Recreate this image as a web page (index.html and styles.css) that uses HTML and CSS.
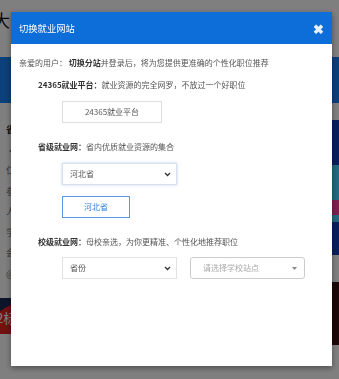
FILE: index.html
```html
<!DOCTYPE html>
<html lang="zh-CN">
<head>
    <meta charset="UTF-8">
    <meta name="viewport" content="width=device-width, initial-scale=1.0">
    <title>切换就业网站</title>
    <link rel="stylesheet" href="styles.css">
</head>
<body>
    <div class="site">
        <div class="site-header"><span class="site-logo">大</span></div>
        <div class="site-nav"></div>
        <div class="site-main">
            <div class="site-left">
                <p class="news-title">省</p>
                <p>·</p>
                <p>仁</p>
                <p>参</p>
                <p>人</p>
                <p>学</p>
                <p>会</p>
                <p>@</p>
                <div class="promo"><span>2标</span></div>
            </div>
            <div class="site-right">
                <div class="ad ad-blue"></div>
                <div class="ad ad-teal"><span class="ad-pink"></span></div>
                <div class="ad ad-navy"></div>
                <div class="ad ad-dark"></div>
            </div>
        </div>
    </div>

    <div class="mask"></div>

    <div class="modal">
        <div class="modal-head">
            <span class="modal-title">切换就业网站</span>
            <span class="modal-close">&#10006;</span>
        </div>
        <div class="modal-body">
            <p class="intro">亲爱的用户： <b>切换分站</b>并登录后，将为您提供更准确的个性化职位推荐</p>

            <p class="label"><b>24365就业平台：</b>就业资源的完全网罗，不放过一个好职位</p>
            <div class="row">
                <a class="btn">24365就业平台</a>
            </div>

            <p class="label label-gap"><b>省级就业网：</b>省内优质就业资源的集合</p>
            <div class="row">
                <div class="select select-focus">
                    <span>河北省</span>
                    <svg width="7" height="5" viewBox="0 0 7 5"><path d="M1 1l2.5 2.5L6 1" fill="none" stroke="#333" stroke-width="1.3"/></svg>
                </div>
            </div>
            <div class="row row-btn">
                <a class="btn btn-blue">河北省</a>
            </div>

            <p class="label label-gap"><b>校级就业网：</b>母校亲选，为你更精准、个性化地推荐职位</p>
            <div class="row row-selects">
                <div class="select">
                    <span>省份</span>
                    <svg width="7" height="5" viewBox="0 0 7 5"><path d="M1 1l2.5 2.5L6 1" fill="none" stroke="#333" stroke-width="1.3"/></svg>
                </div>
                <div class="select select-school">
                    <span>请选择学校站点</span>
                    <svg width="5" height="3" viewBox="0 0 5 3"><path d="M0 0h5L2.5 3z" fill="#888"/></svg>
                </div>
            </div>
        </div>
    </div>
</body>
</html>
```

FILE: styles.css
```css
body {
    margin: 0;
    padding: 0;
    font-family: "Noto Sans CJK SC", "Liberation Sans", sans-serif;
    background: #ffffff;
    overflow: hidden;
}

p {
    margin: 0;
}

/* page behind the dialog */
.site {
    width: 339px;
    height: 379px;
}

.site-header {
    height: 57px;
    padding-top: 9px;
    box-sizing: border-box;
}

.site-logo {
    display: block;
    margin-left: -7px;
    font-size: 17px;
    line-height: 22px;
    color: #111;
}

.site-nav {
    height: 46px;
    background: #1680f5;
}

.site-main {
    display: flex;
    justify-content: space-between;
}

.site-left {
    width: 60px;
    padding-top: 17px;
    padding-left: 6px;
    font-size: 9px;
    line-height: 20.5px;
    color: #707070;
}

.site-left .news-title {
    font-weight: bold;
    color: #222;
}

.promo {
    margin-left: -6px;
    margin-top: 14px;
    height: 36px;
    width: 40px;
    background: linear-gradient(150deg, #1c2a55 0 22%, #e02424 22%);
    color: #fff;
    font-size: 13px;
    line-height: 40px;
    overflow: hidden;
    white-space: nowrap;
}

.promo span {
    margin-left: -4px;
}

.site-right {
    width: 40px;
    padding-top: 17px;
}

.ad {
    height: 45px;
}

.ad-blue {
    background: #163cbc;
}

.ad-teal {
    height: 57px;
    background: #46d2ff;
    padding-top: 35px;
    box-sizing: border-box;
}

.ad-pink {
    display: block;
    height: 15px;
    background: #ff3f9f;
}

.ad-navy {
    height: 33px;
    background: #163cbc;
    margin-bottom: 27px;
}

.ad-dark {
    height: 63px;
    background: #381010;
}

.mask {
    position: fixed;
    inset: 0;
    background: rgba(0, 0, 0, 0.5);
}

/* dialog */
.modal {
    position: fixed;
    left: 11px;
    top: 12px;
    width: 321px;
    height: 354px;
    background: #ffffff;
    box-shadow: 0 2px 6px rgba(0, 0, 0, 0.4);
}

.modal-head {
    height: 32px;
    background: #0d6ed9;
    display: flex;
    align-items: center;
    justify-content: space-between;
    padding: 0 8px 0 8px;
}

.modal-title {
    color: #ffffff;
    font-size: 9.3px;
}

.modal-close {
    color: #e8f0fa;
    font-size: 13px;
    font-weight: bold;
}

.modal-body {
    padding: 13px 8px 0 8px;
    font-size: 8px;
    line-height: 12px;
    color: #555;
}

.intro b {
    color: #333;
}

.label {
    margin-top: 10px;
    padding-left: 19px;
}

.label b {
    color: #333;
}

.label-gap {
    margin-top: 18px;
}

.row {
    display: flex;
    gap: 13px;
    padding-left: 43px;
    margin-top: 10px;
}

.row-btn {
    margin-top: 11px;
}

.row-selects {
    margin-top: 9px;
}

.btn {
    display: flex;
    align-items: center;
    justify-content: center;
    width: 100px;
    height: 22px;
    box-sizing: border-box;
    border: 1px solid #dddddd;
    color: #555;
}

.btn-blue {
    width: 68px;
    border-color: #5a9be6;
    color: #2f7fd8;
}

.select {
    display: flex;
    align-items: center;
    justify-content: space-between;
    width: 115px;
    height: 22px;
    box-sizing: border-box;
    padding: 0 5px 0 7px;
    border: 1px solid #e2e2e2;
    color: #555;
}

.select-focus {
    border-color: #d6e0ee;
    box-shadow: 0 0 3px rgba(90, 140, 210, 0.35);
}

.select-school {
    border-color: #cccccc;
    border-radius: 3px;
    padding: 0 7px 0 12px;
    color: #aaa;
}
```
